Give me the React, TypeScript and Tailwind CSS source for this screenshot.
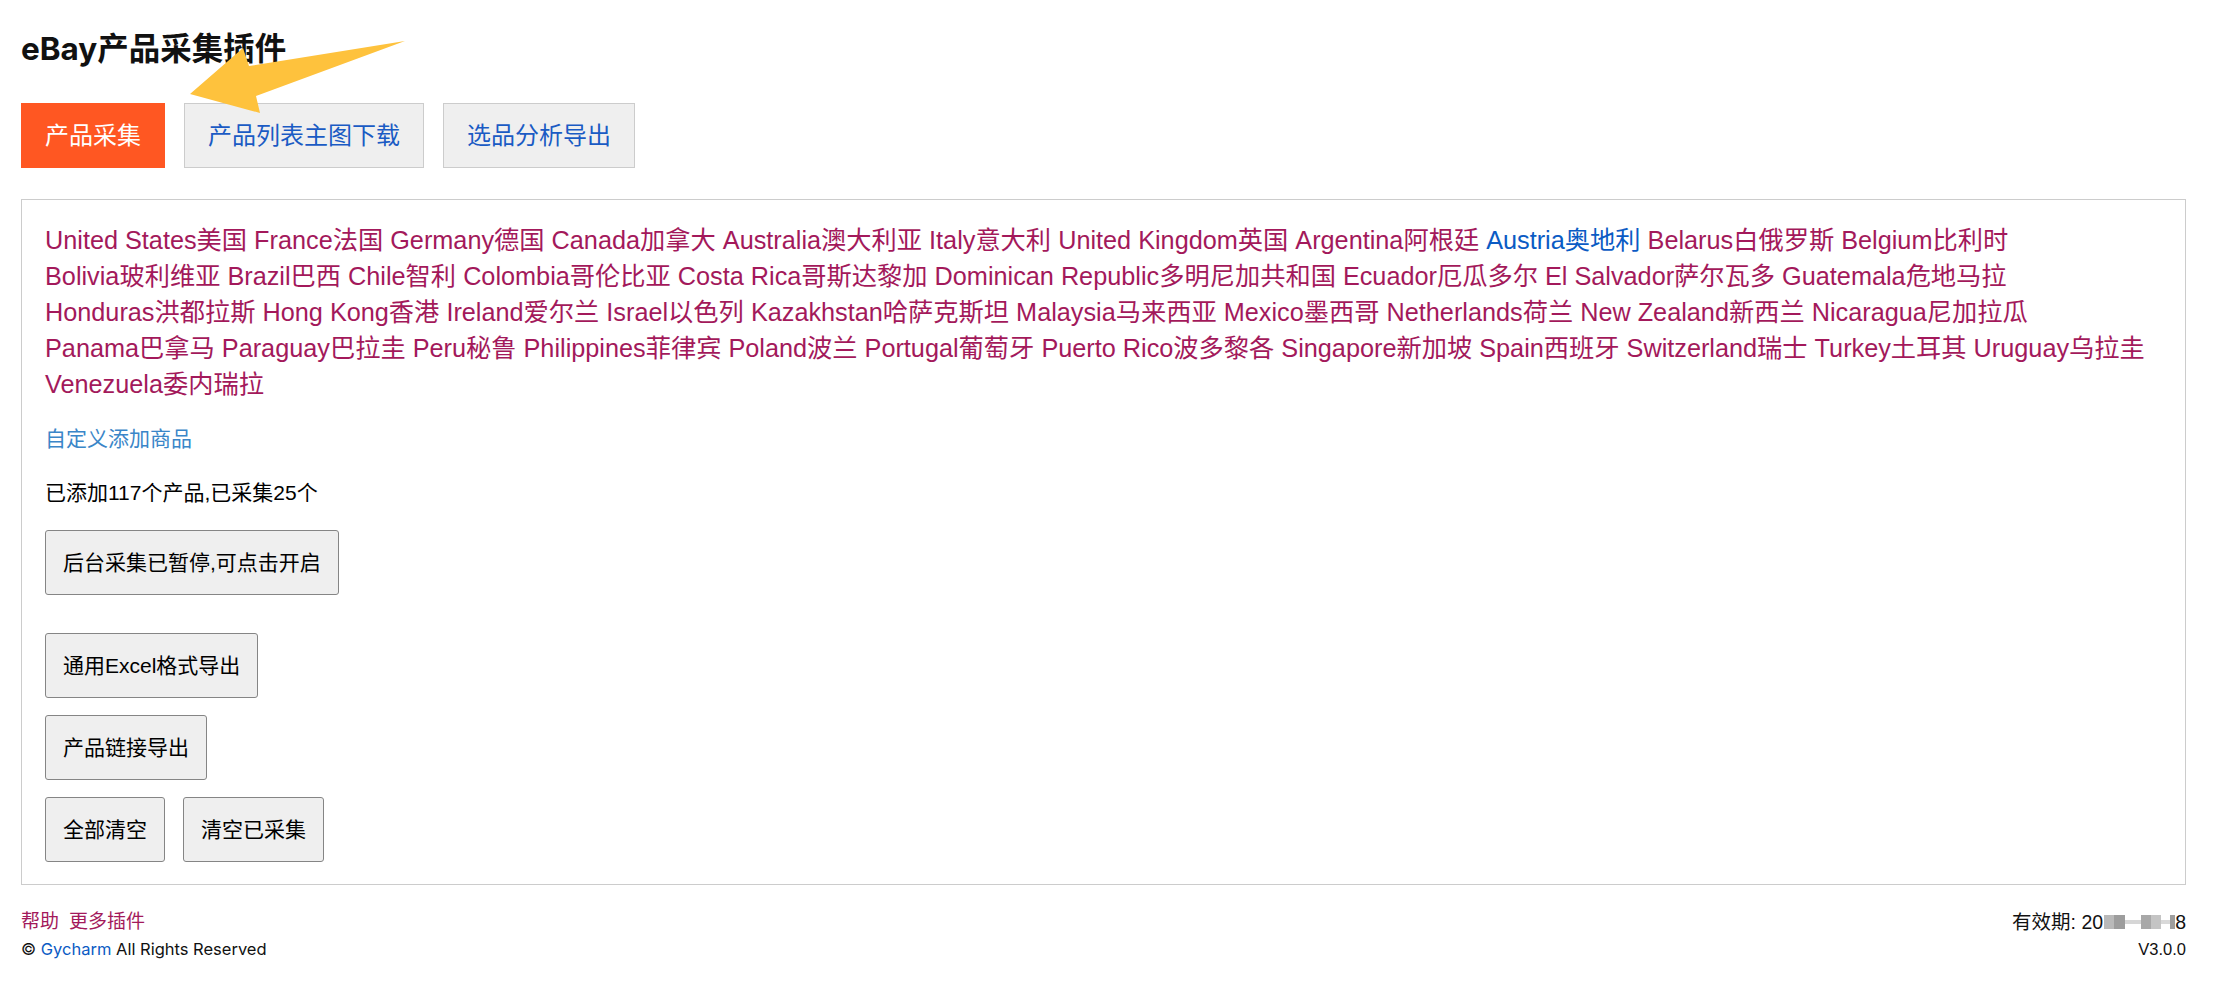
const countries: { en: string; zh: string; active?: boolean }[] = [
  { en: "United States", zh: "美国" },
  { en: "France", zh: "法国" },
  { en: "Germany", zh: "德国" },
  { en: "Canada", zh: "加拿大" },
  { en: "Australia", zh: "澳大利亚" },
  { en: "Italy", zh: "意大利" },
  { en: "United Kingdom", zh: "英国" },
  { en: "Argentina", zh: "阿根廷" },
  { en: "Austria", zh: "奥地利", active: true },
  { en: "Belarus", zh: "白俄罗斯" },
  { en: "Belgium", zh: "比利时" },
  { en: "Bolivia", zh: "玻利维亚" },
  { en: "Brazil", zh: "巴西" },
  { en: "Chile", zh: "智利" },
  { en: "Colombia", zh: "哥伦比亚" },
  { en: "Costa Rica", zh: "哥斯达黎加" },
  { en: "Dominican Republic", zh: "多明尼加共和国" },
  { en: "Ecuador", zh: "厄瓜多尔" },
  { en: "El Salvador", zh: "萨尔瓦多" },
  { en: "Guatemala", zh: "危地马拉" },
  { en: "Honduras", zh: "洪都拉斯" },
  { en: "Hong Kong", zh: "香港" },
  { en: "Ireland", zh: "爱尔兰" },
  { en: "Israel", zh: "以色列" },
  { en: "Kazakhstan", zh: "哈萨克斯坦" },
  { en: "Malaysia", zh: "马来西亚" },
  { en: "Mexico", zh: "墨西哥" },
  { en: "Netherlands", zh: "荷兰" },
  { en: "New Zealand", zh: "新西兰" },
  { en: "Nicaragua", zh: "尼加拉瓜" },
  { en: "Panama", zh: "巴拿马" },
  { en: "Paraguay", zh: "巴拉圭" },
  { en: "Peru", zh: "秘鲁" },
  { en: "Philippines", zh: "菲律宾" },
  { en: "Poland", zh: "波兰" },
  { en: "Portugal", zh: "葡萄牙" },
  { en: "Puerto Rico", zh: "波多黎各" },
  { en: "Singapore", zh: "新加坡" },
  { en: "Spain", zh: "西班牙" },
  { en: "Switzerland", zh: "瑞士" },
  { en: "Turkey", zh: "土耳其" },
  { en: "Uruguay", zh: "乌拉圭" },
  { en: "Venezuela", zh: "委内瑞拉" },
];

const tabs = ["产品采集", "产品列表主图下载", "选品分析导出"];

function ActionButton({ label }: { label: string }) {
  return (
    <button
      type="button"
      className="h-[65px] rounded-[3px] border border-[#858585] bg-[#efefef] px-[17px] text-[21px] text-black"
    >
      {label}
    </button>
  );
}

export default function App() {
  return (
    <div className="relative min-h-screen bg-white pl-[21px] pr-[28px] pt-[28px] font-['Liberation_Sans','Noto_Sans_CJK_SC',sans-serif] text-black">
      <h1 className="font-['Inter','Noto_Sans_CJK_SC',sans-serif] text-[31.5px] font-bold leading-[42px] text-[#111]">
        eBay产品采集插件
      </h1>

      <div className="mt-[33px] flex gap-[19px]">
        {tabs.map((tab, i) => (
          <button
            key={tab}
            type="button"
            className={
              i === 0
                ? "h-[65px] border border-[#ff5722] bg-[#ff5722] px-[23px] text-[24px] text-white"
                : "h-[65px] border border-[#cccccc] bg-[#efefef] px-[23px] text-[24px] text-[#1a5bc4]"
            }
          >
            {tab}
          </button>
        ))}
      </div>

      <div className="mt-[31px] border border-[#cccccc] px-[23px] pt-[22px] pb-[22px]">
        <div className="text-[25.25px] leading-[36px] text-[#a3195b]">
          {countries.map((c, i) => (
            <span key={c.en}>
              <a className={c.active ? "whitespace-nowrap text-[#0b5bc4]" : "whitespace-nowrap"}>
                {c.en}
                {c.zh}
              </a>
              {i < countries.length - 1 ? " " : ""}
            </span>
          ))}
        </div>

        <div className="mt-[22px] text-[21px] leading-[30px] text-[#3a86c8]">自定义添加商品</div>
        <div className="mt-[24px] text-[21px] leading-[30px]">已添加117个产品,已采集25个</div>

        <div className="mt-[22px]">
          <ActionButton label="后台采集已暂停,可点击开启" />
        </div>
        <div className="mt-[38px]">
          <ActionButton label="通用Excel格式导出" />
        </div>
        <div className="mt-[17px]">
          <ActionButton label="产品链接导出" />
        </div>
        <div className="mt-[17px] flex gap-[18px]">
          <ActionButton label="全部清空" />
          <ActionButton label="清空已采集" />
        </div>
      </div>

      <div className="mt-[23px] flex items-center justify-between leading-[28px]">
        <div className="flex gap-[10px] text-[19px] text-[#a3195b]">
          <a>帮助</a>
          <a>更多插件</a>
        </div>
        <div className="flex items-center text-[19.5px] text-[#111]">
          <span>有效期: 20</span>
          <span className="ml-[1px] inline-block h-[14px] w-[10px] bg-[#b9b9b9]" />
          <span className="inline-block h-[14px] w-[11px] bg-[#9d9d9d]" />
          <span className="inline-block h-[4px] w-[16px] bg-[#d6d6d6]" />
          <span className="inline-block h-[14px] w-[10px] bg-[#a8a8a8]" />
          <span className="inline-block h-[14px] w-[10px] bg-[#c4c4c4]" />
          <span className="inline-block h-[4px] w-[9px] bg-[#d9d9d9]" />
          <span className="inline-block h-[14px] w-[5px] bg-[#9e9e9e]" />
          <span>8</span>
        </div>
      </div>
      <div className="flex items-center justify-between pb-[12px] leading-[26px]">
        <div className="font-['Inter',sans-serif] text-[16.5px] text-[#111]">
          © <span className="text-[#0b5bc4]">Gycharm</span> All Rights Reserved
        </div>
        <div className="text-[16.5px] text-[#111]">V3.0.0</div>
      </div>

      <svg
        className="pointer-events-none absolute left-0 top-0 z-10"
        width="420"
        height="130"
        viewBox="0 0 420 130"
      >
        <polygon
          points="190,94 243,48 249,66 405,41 256,96 260,113"
          fill="#fec23d"
        />
      </svg>
    </div>
  );
}
